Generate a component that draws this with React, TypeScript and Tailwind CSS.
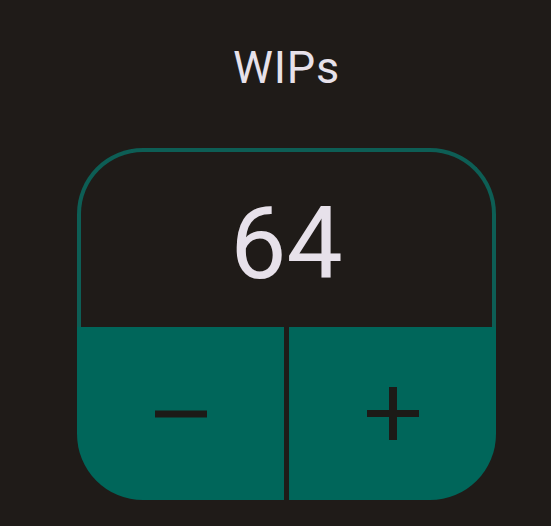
import React, { useState } from "react";

export default function App() {
  const [count, setCount] = useState(64);

  return (
    <div
      className="min-h-[526px] w-full bg-[#1f1b18] flex flex-col items-center pl-[22px]"
      style={{ fontFamily: "Roboto, 'Noto Sans', sans-serif" }}
    >
      <h1 className="pt-[42px] text-[45px] leading-[52px] tracking-[0.8px] font-normal text-[#e7e1ea]">
        WIPs
      </h1>

      <div className="mt-[54px] w-[419px] flex flex-col">
        {/* counter readout */}
        <div className="h-[179px] rounded-t-[66px] border-[4px] border-b-0 border-[#0d5e55] bg-[#1f1b18] flex justify-center pt-[42px]">
          <span className="text-[100px] leading-[100px] text-[#e7e1ea]">
            {count}
          </span>
        </div>

        {/* step buttons */}
        <div className="h-[173px] grid grid-cols-2 gap-[5px]">
          <button
            type="button"
            aria-label="decrement"
            onClick={() => setCount((c) => c - 1)}
            className="bg-[#00665a] rounded-bl-[66px] flex items-center justify-center"
          >
            <svg width="52" height="8" viewBox="0 0 52 8">
              <rect x="0" y="0.5" width="52" height="7" fill="#1c1a17" />
            </svg>
          </button>
          <button
            type="button"
            aria-label="increment"
            onClick={() => setCount((c) => c + 1)}
            className="bg-[#00665a] rounded-br-[66px] flex items-center justify-center"
          >
            <svg width="52" height="53" viewBox="0 0 52 53">
              <rect x="0" y="23" width="52" height="7" fill="#1c1a17" />
              <rect x="22" y="0" width="8" height="53" fill="#1c1a17" />
            </svg>
          </button>
        </div>
      </div>
    </div>
  );
}
